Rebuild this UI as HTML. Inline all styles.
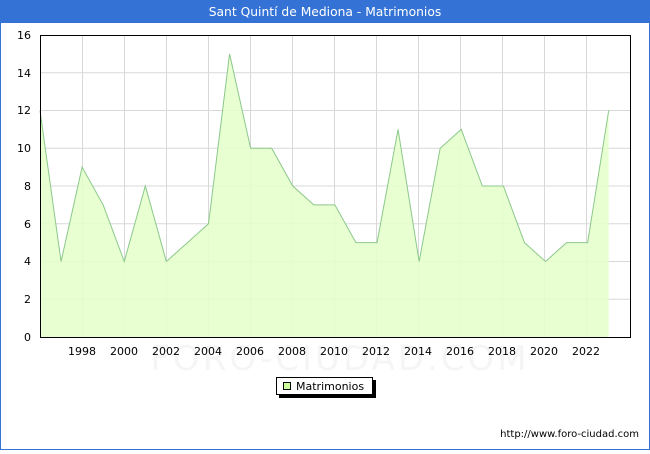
<!DOCTYPE html><html><head><style>body{margin:0;width:650px;height:450px;overflow:hidden;font-family:"DejaVu Sans","Liberation Sans",sans-serif;background:#fff}</style></head><body>
<svg width="650" height="450" xmlns="http://www.w3.org/2000/svg" font-family="DejaVu Sans, Liberation Sans, sans-serif">
<rect x="0" y="0" width="650" height="450" fill="#3473d5"/>
<rect x="1" y="23" width="648" height="426" fill="#fff"/>
<text x="325" y="16" fill="#fff" font-size="12.3" text-anchor="middle">Sant Quintí de Mediona - Matrimonios</text>
<g stroke="#d8d8d8" stroke-width="1">
<line x1="40" x2="630" y1="299.25" y2="299.25"/><line x1="40" x2="630" y1="261.5" y2="261.5"/><line x1="40" x2="630" y1="223.75" y2="223.75"/><line x1="40" x2="630" y1="186" y2="186"/><line x1="40" x2="630" y1="148.25" y2="148.25"/><line x1="40" x2="630" y1="110.5" y2="110.5"/><line x1="40" x2="630" y1="72.75" y2="72.75"/>
<line y1="35" y2="337" x1="82.5" x2="82.5"/><line y1="35" y2="337" x1="124.5" x2="124.5"/><line y1="35" y2="337" x1="166.5" x2="166.5"/><line y1="35" y2="337" x1="208.5" x2="208.5"/><line y1="35" y2="337" x1="250.5" x2="250.5"/><line y1="35" y2="337" x1="292.5" x2="292.5"/><line y1="35" y2="337" x1="334.5" x2="334.5"/><line y1="35" y2="337" x1="376.5" x2="376.5"/><line y1="35" y2="337" x1="418.5" x2="418.5"/><line y1="35" y2="337" x1="460.5" x2="460.5"/><line y1="35" y2="337" x1="502.5" x2="502.5"/><line y1="35" y2="337" x1="544.5" x2="544.5"/><line y1="35" y2="337" x1="586.5" x2="586.5"/>
</g>
<g transform="translate(40,0) scale(1.003,1) translate(-40,0)">
<polygon fill="#e6ffcc" fill-opacity="0.9" stroke="none" points="40,337 40,110.5 61,261.5 82,167.1 103,204.9 124,261.5 145,186 166,261.5 187,242.6 208,223.75 229,53.9 250,148.25 271,148.25 292,186 313,204.9 334,204.9 355,242.6 376,242.6 397,129.4 418,261.5 439,148.25 460,129.4 481,186 502,186 523,242.6 544,261.5 565,242.6 586,242.6 607,110.5 607,337"/>
<polyline fill="none" stroke="#8cc88c" stroke-width="1" points="40,110.5 61,261.5 82,167.1 103,204.9 124,261.5 145,186 166,261.5 187,242.6 208,223.75 229,53.9 250,148.25 271,148.25 292,186 313,204.9 334,204.9 355,242.6 376,242.6 397,129.4 418,261.5 439,148.25 460,129.4 481,186 502,186 523,242.6 544,261.5 565,242.6 586,242.6 607,110.5"/>
</g>
<rect x="40.5" y="35.5" width="590" height="302" fill="none" stroke="#000" stroke-width="1"/>
<text x="340" y="370" font-size="34" fill="#f0f0f0" text-anchor="middle" opacity="0.6" letter-spacing="3">FORO-CIUDAD.COM</text>
<g font-size="11" fill="#000" text-anchor="end">
<text x="31" y="341">0</text><text x="31" y="303">2</text><text x="31" y="265">4</text><text x="31" y="228">6</text><text x="31" y="190">8</text><text x="31" y="152">10</text><text x="31" y="114">12</text><text x="31" y="77">14</text><text x="31" y="39">16</text>
</g>
<g font-size="11" fill="#000" text-anchor="middle">
<text x="82" y="355">1998</text><text x="124" y="355">2000</text><text x="166" y="355">2002</text><text x="208" y="355">2004</text><text x="250" y="355">2006</text><text x="292" y="355">2008</text><text x="334" y="355">2010</text><text x="376" y="355">2012</text><text x="418" y="355">2014</text><text x="460" y="355">2016</text><text x="502" y="355">2018</text><text x="544" y="355">2020</text><text x="586" y="355">2022</text>
</g>
<rect x="279" y="380" width="97" height="18" fill="#000"/>
<rect x="276.5" y="377.5" width="96" height="17" fill="#fff" stroke="#000" stroke-width="1"/>
<rect x="283.5" y="382.5" width="7" height="7" fill="#ccff99" stroke="#000" stroke-width="1"/>
<text x="296" y="390" font-size="11">Matrimonios</text>
<text x="639" y="437" font-size="10" text-anchor="end">http://www.foro-ciudad.com</text>
</svg></body></html>
